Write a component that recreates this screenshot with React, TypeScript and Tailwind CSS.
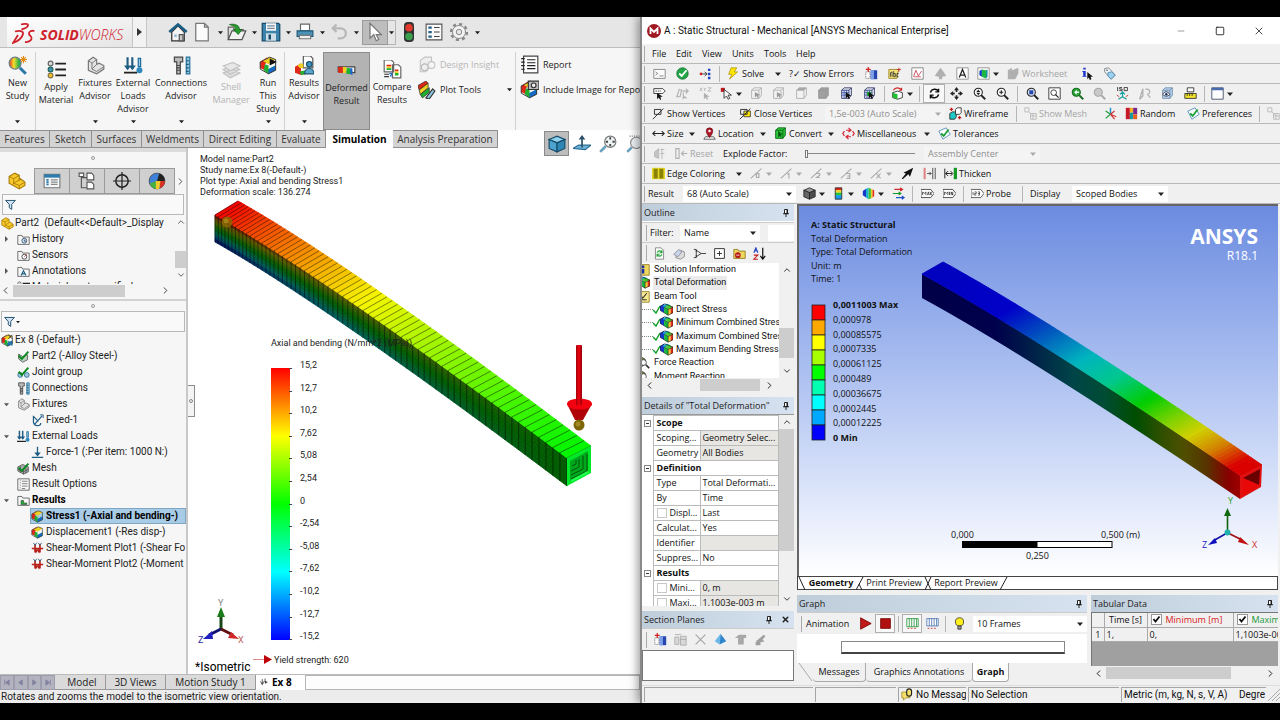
import type { ReactNode } from 'react'
import { ChevronDown, ChevronLeft, ChevronRight, ChevronUp, Minus, Square, X } from 'lucide-react'

/* ---------- icons, all drawn on a 16x16 grid ---------- */

const page = <path d="M3 1h7l3 3v11H3z" fill="#fff" stroke="#777" />
const dottedCube = (fill: string, line: string) => (
  <>
    <path d="M2 4l3-3h9v9l-3 4H2z" fill={fill} stroke={line} />
    <path d="M2 4h9v10M11 4l3-3" fill="none" stroke={line} />
  </>
)
const arrowHead = <path d="M7 6v8l2-2 2 3 1-1-1-3h3z" fill="#111" />
const lens = (fill: string, line: string) => (
  <>
    <circle cx="6.5" cy="6.5" r="5" fill={fill} stroke={line} strokeWidth="1.3" />
    <path d="M10 10l5 5" stroke={line} strokeWidth="2.4" />
  </>
)
const contourCube = (
  <>
    <path d="M0 4l5-3v11l-5-3z" fill="#1438c8" />
    <path d="M3 3l5-2 4 1-6 4z" fill="#18a0d8" />
    <path d="M5 5l5 3v7l-5-3z" fill="#18b840" />
    <path d="M6 4l5-2 5 3-6 3z" fill="#48c830" />
    <path d="M10 8l3-2v7l-3 2z" fill="#f0d020" />
    <path d="M13 6l3-1v7l-3 2z" fill="#e03018" />
    <path d="M0 4l6-3 10 4v7l-6 3-10-6zM5 5l5 3v7M10 8l6-3" fill="none" stroke="#111" strokeWidth=".7" />
  </>
)
const stressCube = (
  <>
    <path d="M1 5l6-4v4L5 7v5l-4-2z" fill="#e02818" />
    <path d="M3 4l6-3 5 2-6 4z" fill="#f0d020" />
    <path d="M5 7l3 1v3l6-3v4l-6 3-4-3z" fill="#20b030" />
    <path d="M8 11l6-3v4l-6 3z" fill="#1868c8" />
    <path d="M1 5l8-4 5 2v9l-6 3-7-4z" fill="none" stroke="#333" strokeWidth=".8" />
  </>
)
const funnel = <path d="M2 3h12l-4.5 5v6l-3-2V8z" fill="#cfe3f2" stroke="#25506f" strokeWidth="1.2" />
const folder = <path d="M1 14V3h5l1 2h8v9z" fill="#f7f7f7" stroke="#555" />
const bolts = (
  <>
    <path d="M2 1h7v4H7v10H4V5H2z" fill="#bbb" stroke="#444" />
    <path d="M4 8h3M4 10h3M4 12h3" stroke="#444" />
    <path d="M12 1h3v14h-3z" fill="#8fc4e0" stroke="#26719b" />
    <path d="M12 4h2M12 7h2M12 10h2M12 13h2" stroke="#164f70" />
  </>
)
const loads = (
  <>
    <path d="M3 1v10M7 1v10" stroke="#1f5d84" strokeWidth="1.8" />
    <path d="M0 8h6l-3 4zM4 8h6l-3 4z" fill="#1f5d84" />
    <path d="M0 14h11" stroke="#222" strokeWidth="1.5" />
    <path d="M12 2h2v7h-2z" fill="#9ac8e2" stroke="#1f6a98" />
    <circle cx="13" cy="12" r="2.5" fill="#2e87bd" />
  </>
)
const bracket = (
  <>
    <path d="M2 4l4-3 3 2v4l2-1 4 2v3l-6 4-7-3z" fill="#e3e3e3" stroke="#777" />
    <path d="M2 4l3 2v5l4 2 6-4M5 6l4-3M5 11l4-4" fill="none" stroke="#777" strokeWidth=".8" />
  </>
)
const yellowPart = (
  <>
    <path d="M1 4l5-3 4 2v4l1-1 4 3v3l-5 3-9-5z" fill="#f7c92a" stroke="#a87a08" />
    <path d="M1 4l4 2v5M5 6l5-3M5 10l5-3M10 15v-3l5-3M10 12l-5-2" fill="none" stroke="#a87a08" strokeWidth=".8" />
  </>
)
const check = <path d="M2 7l4 4 8-9" fill="none" stroke="#0a8a20" strokeWidth="2.4" />
const sectionPlane = (
  <>
    <path d="M7 4h8v11H7z" fill="#2846b0" />
    <path d="M7 4h4v11H7z" fill="#7da0e8" />
    <path d="M1 6h5v8H1z" fill="#fff" stroke="#555" strokeDasharray="1 1" />
    <path d="M1 3h6M4 0v6" stroke="#d02020" strokeWidth="1.5" />
  </>
)
const shearPlot = (
  <>
    <path d="M5 3v10M11 3v10M1 8h14" stroke="#b82018" strokeWidth="2" />
    <path d="M4 9h8l-2 5-2-3-2 3z" fill="#b82018" />
    <path d="M3 1l2 3 2-3M9 1l2 3 2-3" fill="none" stroke="#24506e" />
  </>
)

const icons: Record<string, ReactNode> = {
  home: (
    <>
      <path d="M3 8v7h10V8L8 3z" fill="#f4f4f4" stroke="#333" />
      <path d="M1 8l7-6 7 6" fill="none" stroke="#1b5f85" strokeWidth="2" />
      <path d="M9 10h3v5H9z" fill="#c9c9c9" stroke="#555" />
      <path d="M5 10h2v2H5z" fill="#8fb8d0" />
    </>
  ),
  newDoc: <path d="M3 1h7l3 3v11H3zM10 1v3h3" fill="#fbfbfb" stroke="#777" />,
  open: (
    <>
      <path d="M1 14V4h4l1 2h7v3" fill="#ddd" stroke="#666" />
      <path d="M1 14l3-7h11l-3 7z" fill="#f2f2f2" stroke="#555" />
      <path d="M2 2c5-1 8 1 8 4h2l-3 4-4-4h2C7 4 5 3 2 2z" fill="#279b2c" stroke="#15661b" strokeWidth=".6" />
    </>
  ),
  save: (
    <>
      <path d="M1 1h13l1 1v13H1z" fill="#3b83aa" stroke="#174a68" />
      <path d="M4 1h8v6H4z" fill="#f7f7f7" />
      <path d="M5 3h6M5 5h6" stroke="#789" />
      <path d="M4 9h8v6H4z" fill="#cfdde6" />
      <path d="M6 10h2v4H6z" fill="#174a68" />
    </>
  ),
  print: (
    <>
      <path d="M4 1h8v6H4z" fill="#fff" stroke="#666" />
      <path d="M1 7h14v5H1z" fill="#4a91b8" stroke="#1d5675" />
      <path d="M3 11h10v3H3z" fill="#eee" stroke="#777" />
    </>
  ),
  undo: <path d="M4 5h5c6 0 6 8 0 8H7M6 2L3 5l3 3" fill="none" stroke="#b8b8b8" strokeWidth="1.8" />,
  pointer: <path d="M4 1v12l3-3 2 5 2-1-2-4h4z" fill="#fff" stroke="#777" />,
  traffic: (
    <>
      <rect x="4" y="0" width="8" height="16" rx="3" fill="#333" />
      <circle cx="8" cy="4.5" r="3" fill="#e23a2c" />
      <circle cx="8" cy="11.5" r="3" fill="#3aa04c" />
    </>
  ),
  options: (
    <>
      <path d="M1 1h14v14H1z" fill="#fafafa" stroke="#555" />
      <path d="M3 3h3v2H3zM3 7h3v2H3zM3 11h3v2H3z" fill="#245f85" />
      <path d="M8 4h5M8 8h5M8 12h5" stroke="#444" />
    </>
  ),
  gear: (
    <>
      <circle cx="8" cy="8" r="6.4" fill="none" stroke="#888" strokeWidth="1.8" strokeDasharray="2.5 2.5" />
      <circle cx="8" cy="8" r="5.2" fill="#f4f4f4" stroke="#888" strokeWidth=".8" />
      <circle cx="8" cy="8" r="2.2" fill="#e6e6e6" stroke="#888" strokeWidth=".8" />
    </>
  ),
  newStudy: (
    <>
      <defs>
        <linearGradient id="lensFill">
          <stop offset="0" stopColor="#e03828" />
          <stop offset=".4" stopColor="#f4e02c" />
          <stop offset=".8" stopColor="#30b04c" />
        </linearGradient>
      </defs>
      <circle cx="6" cy="6" r="5" fill="url(#lensFill)" stroke="#6c7a80" />
      <path d="M10 10l5 5" stroke="#2a78a8" strokeWidth="2.5" />
      <path d="M13 0v6M10 3h6M11 1l4 4M15 1l-4 4" stroke="#e08a10" strokeWidth=".9" />
    </>
  ),
  material: (
    <>
      <circle cx="3" cy="3" r="2" fill="#ddd" stroke="#666" />
      <circle cx="3" cy="8" r="2" fill="#3f93c0" stroke="#265" />
      <circle cx="3" cy="13" r="2" fill="#f3c020" stroke="#875" />
      <path d="M7 3h9M7 8h9M7 13h9" stroke="#222" strokeWidth="1.5" />
    </>
  ),
  fixtures: bracket,
  loads,
  bolts,
  shell: (
    <>
      <path d="M1 11l8-3 6 3-8 4zM1 8l8-3 6 3-8 4z" fill="#ddd" stroke="#c2c2c2" />
      <path d="M1 5l8-3 6 3-8 4z" fill="#e8e8e8" stroke="#c2c2c2" />
    </>
  ),
  run: (
    <>
      {stressCube}
      <path d="M9 2l6 3-6 3z" fill="#111" />
    </>
  ),
  results: (
    <>
      <path d="M7 0h6l2 2v8H7z" fill="#fff" stroke="#555" />
      <path d="M0 9l5-3v7l5-1v3l-5 1-5-2z" fill="#e02818" />
      <path d="M2 8l3-2 2 1v3H4z" fill="#f0d020" />
      <path d="M4 13l6-1v3l-5 1z" fill="#20b030" />
      <circle cx="12" cy="7" r="2.3" fill="#3f93c0" stroke="#1d5675" />
      <path d="M8 15c0-6 8-6 8 0z" fill="#5aa5cc" stroke="#1d5675" />
    </>
  ),
  deformed: (
    <>
      <path d="M1 5h14v5l-5-1H1z" fill="#fff" stroke="#444" />
      <path d="M1 5h4v5H1z" fill="#e02818" />
      <path d="M5 5h3v5H5z" fill="#f0d020" />
      <path d="M8 6h3v5H8z" fill="#20b030" />
      <path d="M11 6h2v6l-2-1z" fill="#1868c8" />
    </>
  ),
  compare: (
    <>
      <path d="M1 0h6l2 2v8H1zM8 4h5l2 2v9H8z" fill="#fff" stroke="#666" />
      <path d="M3 4h4v1.500H3zM10 8h3v1.500h-3z" fill="#e02818" />
      <path d="M3 5.500h4V7H3zM10 9.500h3V11h-3z" fill="#f0d020" />
      <path d="M3 7h4v1.500H3zM10 11h3v2h-3z" fill="#20b030" />
      <path d="M1 12h4M1 14h4" stroke="#333" />
      <path d="M5.500 12c1-2 3 0 1 1v1" stroke="#1868c8" fill="none" />
    </>
  ),
  insight: (
    <>
      <path d="M2 4l4-3h6v7l-5 6H2z" fill="#eee" stroke="#c4c4c4" />
      <circle cx="6" cy="10" r="3" fill="none" stroke="#bbb" />
      <circle cx="12" cy="8" r="3" fill="#f6f6f6" stroke="#c4c4c4" />
    </>
  ),
  plotTools: (
    <>
      <path d="M0 4l7-4 2 2-8 6z" fill="#e02818" stroke="#222" strokeWidth=".6" />
      <path d="M1 8l8-6v4l-7 6z" fill="#f0d020" stroke="#222" strokeWidth=".6" />
      <path d="M2 12l8-6v4l-6 5z" fill="#20b030" stroke="#222" strokeWidth=".6" />
      <path d="M7 15l6-8 2 2-5 7z" fill="#8fc4e0" stroke="#333" />
    </>
  ),
  report: (
    <>
      <path d="M3 1h12v14H3z" fill="#fff" stroke="#444" />
      <path d="M6 4h7M6 6.500h7M6 9h7M6 11.500h7" stroke="#222" />
      <path d="M1 3h3M1 6h3M1 9h3M1 12h3" stroke="#222" />
    </>
  ),
  imageReport: (
    <>
      {stressCube}
      <path d="M7 1h9v7H7z" fill="#bbb" stroke="#333" />
      <circle cx="11.5" cy="4.5" r="2" fill="#eee" stroke="#333" />
    </>
  ),
  viewCube: (
    <>
      <path d="M1 4l7-3 7 3-7 3z" fill="#8fd0ee" stroke="#144a68" />
      <path d="M1 4l7 3v8l-7-3z" fill="#4da3cf" stroke="#144a68" />
      <path d="M15 4L8 7v8l7-3z" fill="#2f86b4" stroke="#144a68" />
    </>
  ),
  normalTo: (
    <>
      <path d="M0 12l5-3h11l-5 4z" fill="#6cb2d8" stroke="#2a6a90" />
      <path d="M8 11V2" stroke="#2b5068" strokeWidth="1.5" />
      <path d="M5 4l3-4 3 4z" fill="#2b5068" />
    </>
  ),
  zoomFit: (
    <>
      <circle cx="10" cy="6" r="5" fill="#eef3f6" stroke="#777" />
      <path d="M6 10l-5 5" stroke="#6aa2c2" strokeWidth="2.4" />
      <path d="M10 2v2M10 8v2M6 6h2M12 6h2" stroke="#444" strokeWidth="1.6" />
    </>
  ),
  zoomArea: (
    <>
      <circle cx="10" cy="7" r="5" fill="#eef3f6" stroke="#888" />
      <path d="M6 11l-4 4" stroke="#6aa2c2" strokeWidth="2.4" />
      <path d="M4 1h12v10" stroke="#888" fill="none" strokeDasharray="1 1" />
    </>
  ),
  part: yellowPart,
  propertyList: (
    <>
      <path d="M1 2h14v12H1z" fill="#f4f8fa" stroke="#777" />
      <path d="M1 2h14v3H1z" fill="#2c7ba8" />
      <path d="M3 7h2M3 9h2M3 11h2" stroke="#2c7ba8" strokeWidth="1.5" />
      <path d="M7 7h6M7 9h6M7 11h6" stroke="#888" />
    </>
  ),
  configs: (
    <>
      <path d="M3 1v13h5M3 5h5" fill="none" stroke="#555" />
      <path d="M1 1h4v3H1zM8 1h4l2 2v4H8zM8 9h4l2 2v4H8z" fill="#fff" stroke="#555" />
    </>
  ),
  target: (
    <>
      <circle cx="8" cy="8" r="5.5" fill="none" stroke="#222" strokeWidth="1.3" />
      <path d="M8 0v16M0 8h16" stroke="#222" strokeWidth="1.1" />
    </>
  ),
  ball: (
    <>
      <circle cx="8" cy="8" r="7" fill="#3f80d8" stroke="#333" strokeWidth=".6" />
      <path d="M8 8l2-6.700a7 7 0 0 1 5 6.700z" fill="#222" />
      <path d="M10 8h5a7 7 0 0 1-4 6.400z" fill="#d83020" />
      <path d="M1.500 10L8 8l-1 7a7 7 0 0 1-5.500-5z" fill="#48b040" />
      <path d="M7 8h4l-1 7H7z" fill="#f2c828" />
    </>
  ),
  funnel,
  history: (
    <>
      {folder}
      <circle cx="9" cy="9.5" r="3" fill="#dceaf2" stroke="#246" />
      <path d="M9 8v2h2" stroke="#246" fill="none" />
    </>
  ),
  sensors: (
    <>
      {folder}
      <circle cx="9" cy="9.5" r="3" fill="#fff" stroke="#333" />
      <path d="M9 9.500l3-3" stroke="#c22" />
    </>
  ),
  notes: (
    <>
      {folder}
      <path d="M5 13l3-6 3 6M6 11h4" stroke="#1c5e88" fill="none" strokeWidth="1.4" />
    </>
  ),
  study: (
    <>
      {stressCube}
      <path d="M9 9l5 5" stroke="#2a78a8" strokeWidth="2" />
      <path d="M9 1l5 5M14 1L9 6" stroke="#222" />
    </>
  ),
  solidCheck: (
    <>
      <path d="M2 5l5 3 6-2v6l-6 3-5-4z" fill="#b9cfc0" stroke="#555" />
      {check}
    </>
  ),
  jointCheck: (
    <>
      <circle cx="4" cy="11" r="3" fill="#9dc7dd" stroke="#28698e" />
      <circle cx="12" cy="11" r="3" fill="#9dc7dd" stroke="#28698e" />
      {check}
    </>
  ),
  meshCheck: (
    <>
      <path d="M1 6l6-3 7 3v6l-6 3-7-4z" fill="#aaa" stroke="#555" />
      <path d="M1 9l7 3 6-3M4 5v8M8 8v7M11 7v7" stroke="#555" fill="none" />
      {check}
    </>
  ),
  fixed: (
    <>
      <path d="M3 2v8c1 6 9 5 9 1M4 13l10-11M3 3l6 6" stroke="#1f5d84" strokeWidth="1.5" fill="none" />
      <path d="M11 1h4v4" stroke="#1f5d84" fill="none" />
    </>
  ),
  force: (
    <>
      <path d="M8 1v9M1 14h14" stroke="#1f5d84" strokeWidth="1.6" />
      <path d="M4 8h8l-4 5z" fill="#1f5d84" />
    </>
  ),
  resultOptions: (
    <>
      <path d="M1 1h14v14H1z" fill="#fafafa" stroke="#555" />
      <path d="M4 2v12" stroke="#999" strokeDasharray="2 1" />
      <path d="M6 4h7M6 7h7M6 10h7M6 13h4" stroke="#666" />
    </>
  ),
  resultsFolder: (
    <>
      {folder}
      <path d="M5 8h3v3h4v2H5z" fill="#20b030" stroke="#333" strokeWidth=".7" />
    </>
  ),
  stress: stressCube,
  shearPlot,
  studyTab: (
    <>
      <path d="M4 2v9M9 1v5M1 6l3 6 3-6" stroke="#333" fill="none" strokeWidth="1.4" />
      <path d="M8 5l6 2-5 3z" fill="#333" />
    </>
  ),

  console: <path d="M1 3h14v11H1zM3 6l3 2-3 2M8 11h5" fill="#fbfbfb" stroke="#777" />,
  okBall: (
    <>
      <circle cx="8" cy="8" r="7" fill="#23a646" stroke="#0f6d2a" />
      <path d="M4 8l3 3 6-7" stroke="#fff" strokeWidth="2.2" fill="none" />
    </>
  ),
  treeJump: (
    <>
      <path d="M1 7h3v3H1z" fill="#c22" />
      <path d="M4 8.500h5M7 6l3 2.500L7 11" stroke="#222" fill="none" />
      <path d="M11 2h3v3h-3zM11 7h3v3h-3zM11 12h3v3h-3z" fill="#2244c0" />
    </>
  ),
  bolt: <path d="M5 1h7L9 6h4L3 15l3-6H2z" fill="#ffe600" stroke="#a08600" strokeWidth=".8" />,
  sectionPlane,
  noteTag: (
    <>
      <path d="M1 3h12l-2 11H1z" fill="#f5e27a" stroke="#997f1a" />
      <path d="M3 12V7l2-1v6M7 5v7h2V8H7M13 8h-2v4h2" stroke="#333" fill="none" />
      <path d="M11 3h5M13.500 1v5" stroke="#c22" />
    </>
  ),
  chartBox: (
    <>
      <path d="M1 1h14v14H1z" fill="#fff" stroke="#777" />
      <path d="M3 12l3-8 3 7 4-6M4 12h8" stroke="#c43a4a" fill="none" />
    </>
  ),
  greyTree: <path d="M8 1l4 5 3 5-5 1v3H6v-3l-5-1 3-5z" fill="#b0b0b0" />,
  letterBox: (
    <>
      <path d="M1 1h14v14H1z" fill="#fff" stroke="#888" />
      <path d="M4 13l4-10 4 10M5 10h6" stroke="#222" strokeWidth="1.5" fill="none" />
    </>
  ),
  cubeBox: (
    <>
      <path d="M1 1h14v14H1z" fill="#fff" stroke="#888" />
      <path d="M3 5l3-2v9l-3-2z" fill="#1438c8" />
      <path d="M6 3l5 1v10l-5-2z" fill="#18b840" />
      <path d="M11 4l2-1v9l-2 2z" fill="#189098" />
    </>
  ),
  worksheet: <path d="M1 4l5-3v3l8-3v7l-4 7H1z" fill="#b0b0b0" />,
  info: (
    <>
      <path d="M4 1h3v2H4zM3 5h4v6h1v1H3v-1h1V6H3z" fill="#1830d0" />
      <path d="M9 6v9l2-2 1 3 2-1-1-3h3z" fill="#111" />
    </>
  ),
  tag: (
    <>
      <path d="M2 2l5-1 8 9-5 5-8-9z" fill="#e9f4fb" stroke="#777" />
      <path d="M6 7l5-1 4 4-5 5-4-4z" fill="#9cd0f0" stroke="#4a86aa" />
      <circle cx="5" cy="4" r="1" fill="#555" />
    </>
  ),
  labelPick: (
    <>
      <path d="M1 2h11l3 3-3 3H1z" fill="#fff" stroke="#222" />
      <path d="M3 5h7" stroke="#222" strokeDasharray="2 1" />
      <path d="M5 7v8l2-2 2 3 1-1-1-3h3z" fill="#111" />
    </>
  ),
  greyPick: <path d="M4 3l-3 9h4l2-8zM8 5h7M12 2l3 3-3 3M9 7v7l2-2 2 2" stroke="#b0b0b0" fill="none" strokeWidth="1.4" />,
  xyz: (
    <>
      <path d="M1 1l3 4M4 1L1 5M6 1l1 2 2-2M7 3v2M11 1h4l-4 4h4" stroke="#b0b0b0" fill="none" />
      <path d="M6 7v8l2-2 2 3 1-1-1-3h3z" fill="#b0b0b0" />
    </>
  ),
  pickMode: (
    <>
      <path d="M1 1h5v5H1z" fill="#c01818" />
      <path d="M5 3v11l3-3 2 4 2-1-2-4h4z" fill="#fff" stroke="#222" />
    </>
  ),
  vertexCube: (
    <>
      {dottedCube('#f2f2f2', '#a8a8a8')}
      <path d="M6 6v7l2-2 2 3v-4h3z" fill="#999" />
    </>
  ),
  faceCube: (
    <>
      {dottedCube('#f2f2f2', '#a8a8a8')}
      <path d="M2 4l3-3h9l-3 3z" fill="#a8a8a8" />
    </>
  ),
  bodyCube: dottedCube('#a0a0a0', '#989898'),
  nodeCube: (
    <>
      {dottedCube('#dfe4f4', '#26305c')}
      <path d="M2 7h9M2 10h9M5 4v10M8 4v10" stroke="#3850b0" />
      {arrowHead}
    </>
  ),
  elemCube: (
    <>
      {dottedCube('#dfe4f4', '#26305c')}
      <path d="M2 7h9M2 10h9M5 4v10M8 4v10" stroke="#3850b0" />
      <path d="M5 6h5v5H5z" fill="#18a030" />
      {arrowHead}
    </>
  ),
  extend: (
    <>
      <path d="M2 7l6-2 6 2v6l-6 2-6-2z" fill="#fff" stroke="#222" />
      <path d="M2 7l6 2v6l-6-2z" fill="#20c030" />
      <path d="M3 4c2-4 8-4 10 0M13 1v3h-3" stroke="#d02020" fill="none" strokeWidth="1.4" />
    </>
  ),
  rotate: (
    <path d="M3 7c1-5 8-6 10-1M13 9c-1 5-8 6-10 1M13 2v4H9M3 14v-4h4" stroke="#111" fill="none" strokeWidth="1.8" />
  ),
  move: (
    <path
      d="M8 0l3 4H9v2H7V4H5zM8 16l3-4H9v-2H7v2H5zM0 8l4-3v2h2v2H4v2zM16 8l-4-3v2h-2v2h2v2z"
      fill="#222"
    />
  ),
  zoomPan: (
    <>
      {lens('#fff', '#222')}
      <path d="M4 6l2.500-3L9 6zM4 7l2.500 3L9 7z" fill="#222" />
    </>
  ),
  zoomIn: (
    <>
      {lens('#fff', '#222')}
      <path d="M4 6.500h5M6.500 4v5" stroke="#222" strokeWidth="1.4" />
    </>
  ),
  zoomModel: (
    <>
      {lens('#dfe8f8', '#222')}
      <path d="M4 4h5v5H4z" fill="#2846b0" />
    </>
  ),
  zoomBox: (
    <>
      <path d="M1 1h14v14H1z" fill="#fff" stroke="#222" />
      <circle cx="7" cy="7" r="3.5" fill="none" stroke="#222" />
      <path d="M9 9l4 4" stroke="#222" strokeWidth="1.5" />
    </>
  ),
  zoomBack: (
    <>
      {lens('#28a838', '#156a20')}
      <path d="M4 6.500l3-3v2h3v2H7v2z" fill="#fff" />
    </>
  ),
  zoomNext: lens('#c8c8c8', '#a8a8a8'),
  iso: (
    <>
      <path d="M2 0v5M7.500.5H4.500v2h3v2H4M10 .5h4v4h-4z" stroke="#222" fill="none" />
      <path d="M8 7v5M8 12l-5 3M8 12l5 3M5 9l3-3 3 3" stroke="#18a0a0" strokeWidth="1.5" fill="none" />
      <path d="M1 10l3 2M15 10l-3 2" stroke="#c22" />
    </>
  ),
  lookAt: <path d="M2 15L6 2v9zM9 3c6-2 7 5 3 6l3 4" stroke="#b0b0b0" fill="none" strokeWidth="1.6" />,
  eyeCube: (
    <>
      {dottedCube('#b8d0ec', '#6a8aa8')}
      <path d="M2 9c3-4 6-4 9 0-3 3-6 3-9 0z" fill="#fff" stroke="#223" />
      <circle cx="6.5" cy="9" r="1.6" fill="#223a70" />
    </>
  ),
  ruler: (
    <>
      <path d="M4 1h8v5H4z" fill="#fff" stroke="#222" />
      <path d="M1 8h14v6H1z" fill="#f3e32c" stroke="#222" />
      <path d="M4 8v3M7 8v3M10 8v3" stroke="#222" />
    </>
  ),
  windowBox: (
    <>
      <path d="M1 1h14v14H1z" fill="#fff" stroke="#33405a" />
      <path d="M1 1h14v3H1z" fill="#4a6ab0" />
    </>
  ),
  vertices: <path d="M3 3h8v6H3zM1 15L14 2" stroke="#333" fill="none" strokeWidth="1.2" />,
  closeVertices: (
    <>
      <path d="M6 5h8v7H6z" fill="#ffe600" stroke="#333" />
      <path d="M2 3h8v6H2zM1 15L14 2" stroke="#333" fill="none" strokeWidth="1.2" />
    </>
  ),
  wireframe: (
    <>
      <path d="M1 8l3-2h5v6l-2 3H1z" fill="#20c8c8" stroke="#222" />
      <path d="M8 3l2-2h5v6l-2 2H8z" fill="#fff" stroke="#222" />
      <path d="M1 3h4M3 1v4M11 13h4M13 11v4" stroke="#c01818" strokeWidth="1.6" />
    </>
  ),
  showMesh: <path d="M1 1h5v5H1zM8 8h7v7H8zM8 11h7M11 8v7M6 6l3 3" stroke="#b4b4b4" fill="none" />,
  axes: (
    <>
      <path d="M8 1v8" stroke="#2090c8" strokeWidth="1.8" />
      <path d="M8 9l-6 5M2 5l6 4" stroke="#20a040" strokeWidth="1.6" />
      <path d="M8 9l7 3M8 9l5 6M8 9l5-4" stroke="#d03030" strokeWidth="1.4" />
    </>
  ),
  random: (
    <>
      <path d="M1 1h5v14H1z" fill="#c81828" />
      <path d="M6 1h4v6H6z" fill="#f3b020" />
      <path d="M10 1h5v8h-5z" fill="#7a2890" />
      <path d="M6 7h4v8H6z" fill="#1a9aa0" />
      <path d="M10 9h5v6h-5z" fill="#e86020" />
    </>
  ),
  prefs: (
    <>
      <path d="M1 5l9-4 5 8-9 6z" fill="#f8fbff" stroke="#4a88b8" />
      <path d="M4 8l3 3 6-8" stroke="#18a030" strokeWidth="2.2" fill="none" />
    </>
  ),
  size: <path d="M1 8h14M4 5L1 8l3 3M12 5l3 3-3 3" stroke="#222" fill="none" strokeWidth="1.3" />,
  location: (
    <>
      <path d="M3 12l-2 3h14l-2-3z" fill="#fff" stroke="#444" />
      <path d="M8 13C4 8 4 6 4 5a4 4 0 0 1 8 0c0 1 0 3-4 8z" fill="#b01828" stroke="#500" strokeWidth=".7" />
      <circle cx="8" cy="5" r="1.5" fill="#fff" />
    </>
  ),
  convert: (
    <>
      {dottedCube('#28c838', '#0c5c14')}
      <path d="M5 5v8l2-2 2 2V9h2z" fill="#0c5c14" />
    </>
  ),
  misc: (
    <path
      d="M5 4h5M8 1l3 3-3 2M3 5L1 8l2 3M13 5l2 3-2 3M11 12H6M8 10l-3 2 3 3"
      stroke="#d82838"
      fill="none"
      strokeWidth="1.5"
    />
  ),
  explode: <path d="M2 6l5-4v12l-5-2zM9 3h5M11 3v12M9 8h5" stroke="#b0b0b0" fill="#c4c4c4" />,
  reset: <path d="M1 2h4v12H1zM15 8H8M11 5L8 8l3 3" stroke="#b0b0b0" fill="none" strokeWidth="1.4" />,
  edgeColor: (
    <>
      <path d="M0 1h16v14H0z" fill="#e6d820" />
      <path d="M2 2h5v12H2zM9 2h5v12H9z" fill="#8a8208" />
    </>
  ),
  edge0: <path d="M1 14L14 2M8 8h3v5H8z" stroke="#a8a8a8" fill="none" strokeWidth="1.3" />,
  edge1: <path d="M1 14L14 2M9 9l2-1v6" stroke="#a8a8a8" fill="none" strokeWidth="1.3" />,
  edge2: <path d="M1 14L14 2M8 8h4v2l-4 3h4" stroke="#a8a8a8" fill="none" strokeWidth="1.3" />,
  edge3: <path d="M1 14L14 2M8 8h4v6H8M9 11h3" stroke="#a8a8a8" fill="none" strokeWidth="1.3" />,
  edge4: <path d="M1 14L14 2M8 8l5 6M13 8l-5 6" stroke="#a8a8a8" fill="none" strokeWidth="1.3" />,
  blackArrow: <path d="M15 1l-4 11-2-3-7 6-1-1 5-6-3-1z" fill="#111" />,
  gap: (
    <>
      <path d="M2 1v14" stroke="#e08080" strokeWidth="2.5" />
      <path d="M5 8h5M8 6l2 2-2 2M12 1v14M15 1v14" stroke="#333" fill="none" />
    </>
  ),
  thicken: (
    <>
      <path d="M1 2v12M2 8h8M5 5L2 8l3 3M8 5l3 3-3 3" stroke="#222" fill="none" strokeWidth="1.2" />
      <path d="M12 1h4v14h-4z" fill="#189a28" />
    </>
  ),
  greyCube: (
    <>
      <path d="M1 4l7-3 7 3-7 3z" fill="#999" stroke="#222" />
      <path d="M1 4l7 3v8l-7-3z" fill="#666" stroke="#222" />
      <path d="M15 4L8 7v8l7-3z" fill="#4c4c4c" stroke="#222" />
    </>
  ),
  legend: (
    <>
      <path d="M4 1h8v3H4z" fill="#e02818" />
      <path d="M4 4h8v3H4z" fill="#f4d820" />
      <path d="M4 7h8v3H4z" fill="#20c838" />
      <path d="M4 10h8v5H4z" fill="#1898e8" />
      <path d="M4 1h8v14H4z" fill="none" stroke="#222" />
    </>
  ),
  contour: contourCube,
  bands: (
    <>
      <path d="M1 5l4-3v11l-4-3z" fill="#1438c8" />
      <path d="M5 2l3-1v14l-3-2z" fill="#18b0d0" />
      <path d="M8 1l3 1v12l-3 1z" fill="#38c040" />
      <path d="M11 2l2 1v10l-2 1z" fill="#f0d020" />
      <path d="M13 3l2 1v7l-2 2z" fill="#e03018" />
    </>
  ),
  vectors: (
    <>
      <path d="M3 3h10M10 1l3 2-3 2" stroke="#d02828" fill="none" strokeWidth="1.4" />
      <path d="M1 8h10M8 6l3 2-3 2" stroke="#189a28" fill="none" strokeWidth="1.4" />
      <path d="M5 13h10M12 11l3 2-3 2" stroke="#2050c8" fill="none" strokeWidth="1.4" />
    </>
  ),
  maxTag: <path d="M0 3h12l4 5-4 5H0zM2 10V6l2 2 2-2v4M8 10l1-4 1 4M11 6l2 4M13 6l-2 4" stroke="#333" fill="#fff" />,
  minTag: <path d="M0 3h12l4 5-4 5H0zM2 10V6l2 2 2-2v4M8 6v4M10 10V6l2 4V6" stroke="#333" fill="#fff" />,
  probe: <path d="M0 3h12l4 5-4 5H0zM2.500 6v4M4.500 6h2v2h-2v2h2M8.500 6h2v4h-2M8.500 8h2" stroke="#333" fill="#fff" strokeWidth=".9" />,
  refresh: (
    <>
      {page}
      <path d="M5 7c1-3 5-3 6 0M11 9c-1 3-5 3-6 0M11 4v3H8M5 12V9h3" stroke="#18a030" fill="none" strokeWidth="1.3" />
    </>
  ),
  eraser: (
    <>
      <path d="M3 13l6-9 5 2v6l-5 3z" fill="#ddd" stroke="#888" />
      <path d="M1 9l6-6 4 3-5 6z" fill="#c8d4e8" stroke="#889" />
    </>
  ),
  merge: <path d="M1 3h3v3M1 13h3v-3M4 4l6 4-6 4zM10 8h6" stroke="#222" fill="none" />,
  plusBox: <path d="M2 2h12v12H2zM5 8h6M8 5v6" stroke="#333" fill="#fff" strokeWidth="1.2" />,
  folderStop: (
    <>
      <path d="M1 14V3h5l1 2h8v9z" fill="#f0d860" stroke="#8a7414" />
      <circle cx="6" cy="10" r="3.5" fill="#b81818" />
      <path d="M4 10h4" stroke="#fff" />
    </>
  ),
  sortAz: (
    <>
      <path d="M1 7l2.500-6L6 7M2 5h3" stroke="#2040c0" fill="none" strokeWidth="1.3" />
      <path d="M1 10h5l-5 5h5" stroke="#c01818" fill="none" strokeWidth="1.3" />
      <path d="M12 1v13M9 11l3 4 3-4" stroke="#111" fill="none" strokeWidth="1.5" />
    </>
  ),
  infoFolder: (
    <>
      <path d="M1 2h14v13H1z" fill="#f0d860" stroke="#8a7414" />
      <path d="M6 3h3v3H6zM6 7h3v6H6z" fill="#1830a0" />
    </>
  ),
  beamTool: (
    <>
      <path d="M1 2h14v13H1z" fill="#f6e88c" stroke="#8a7414" />
      <path d="M4 6l3 4 5-6M4 12h8" stroke="#333" fill="none" strokeWidth="1.4" />
    </>
  ),
  probeLens: (
    <>
      <path d="M1 4l4-3 5 3v6l-4 3-5-3z" fill="#7a9a40" stroke="#333" />
      <circle cx="8" cy="8" r="3.5" fill="#fff" stroke="#333" />
      <path d="M11 11l4 4" stroke="#333" strokeWidth="2" />
    </>
  ),
  newPlaneOff: <path d="M1 5h5v9H1zM8 4h7v11H8zM8 8h7M1 2h8" stroke="#a8a8a8" fill="#d8d8d8" />,
  cross: <path d="M2 2l12 12M14 2L2 14" stroke="#a8a8a8" strokeWidth="1.6" />,
  bluePyramid: (
    <>
      <path d="M8 1L1 10l6 4z" fill="#6ab8e8" />
      <path d="M8 1l7 9-8 4z" fill="#2f86cc" />
    </>
  ),
  greyHat: <path d="M1 6l5-4h9v4h-3v8H5V6z" fill="#a8a8a8" />,
  greyStack: <path d="M2 15v-4h6v4zM4 9l8-7 2 2-4 5zM3 9h9v2H3z" fill="#a0a0a0" />,
  play: <path d="M2 1l13 7-13 7z" fill="#c01818" stroke="#700" />,
  stop: <path d="M2 2h12v12H2z" fill="#b01010" stroke="#700" />,
  distGreen: (
    <>
      <path d="M1 2h14v10H1zM4 2v10M7 2v10M10 2v10M13 2v10" stroke="#209038" fill="#fff" />
      <path d="M2 14h12" stroke="#c22" strokeDasharray="2 2" />
    </>
  ),
  distBlue: (
    <>
      <path d="M1 2h14v9H1zM4 2v9M7 2v9M10 2v9M13 2v9" stroke="#4870b0" fill="#fff" />
      <path d="M2 14h12" stroke="#c22" strokeDasharray="2 2" />
    </>
  ),
  bulb: (
    <>
      <circle cx="8" cy="6" r="5" fill="#fff01c" stroke="#333" />
      <path d="M6 11h4v4H6z" fill="#999" stroke="#333" />
    </>
  ),
  message: (
    <>
      <path d="M1 5h10v7H6l-3 3v-3H1z" fill="#f4e06a" stroke="#a08a20" />
      <rect x="7" y="1" width="6" height="9" rx="3" fill="#f4e06a" stroke="#222" strokeWidth="1.4" />
    </>
  ),
  pin: <path d="M5 1h6v8H5zM10 1v8M2 9.500h12M8 10v6" fill="#fff" stroke="#111" strokeWidth="1.8" />,
}

function Icon({ name, size = 13 }: { name: string; size?: number }) {
  return (
    <svg width={size} height={size} viewBox="0 0 16 16" className="shrink-0" aria-hidden="true">
      {icons[name]}
    </svg>
  )
}

function Caret({ color = '#222', size = 6 }: { color?: string; size?: number }) {
  return (
    <svg width={size} height={size} viewBox="0 0 6 6" className="shrink-0" aria-hidden="true">
      <path d="M0 1.500h6L3 5z" fill={color} />
    </svg>
  )
}

/* ---------- shared geometry for the two beams ---------- */

type Pt = [number, number]

function bezier(a: Pt, c: Pt, b: Pt, t: number): Pt {
  const u = 1 - t
  return [u * u * a[0] + 2 * u * t * c[0] + t * t * b[0], u * u * a[1] + 2 * u * t * c[1] + t * t * b[1]]
}

const mix = (a: Pt, b: Pt, k: number): Pt => [a[0] + (b[0] - a[0]) * k, a[1] + (b[1] - a[1]) * k]
const poly = (...pts: Pt[]) => pts.map((p) => p[0].toFixed(2) + ',' + p[1].toFixed(2)).join(' ')

/* ---------- SOLIDWORKS window ---------- */

function QuickButton({ name, label, className, size = 20 }: { name: string; label: string; className: string; size?: number }) {
  return (
    <button aria-label={label} className={`flex h-[25px] items-center justify-center ${className}`}>
      <Icon name={name} size={size} />
    </button>
  )
}

function QuickCaret() {
  return (
    <span className="flex w-3 justify-center">
      <Caret size={5} />
    </span>
  )
}

function SwTitleBar() {
  return (
    <header className="flex h-[31px] shrink-0 items-center border-b border-[#bdbdbd] bg-[#e6e6e6]">
      <div className="ml-[7px] flex h-full w-[125px] items-center gap-1 bg-linear-to-br from-white to-[#e4e4e4] pt-1 pl-[5px]">
        <svg width="24" height="22" viewBox="0 0 24 22" fill="none" stroke="#d0202c" strokeWidth="1.8" aria-hidden="true">
          <path d="M9 1.500c3-.8 7-.8 7 .6 0 2-4 3.800-6.500 4.400" />
          <path d="M3 8.500c4-1 8.500-1 8 2.500-.6 3.500-5 7.500-10 9l5-8" />
          <path d="M22.500 8c-3-.8-6 .4-5.500 3 .4 2 3.500 2.500 2.500 5-.7 2-4 3.500-6.500 3" />
        </svg>
        <span className="text-[14px] whitespace-nowrap text-[#d0202c] italic">
          <b>SOLID</b>
          <span className="font-light">WORKS</span>
        </span>
      </div>
      <button aria-label="Expand menu" className="flex h-full w-[15px] items-center justify-center border-x border-[#c6c6c6] bg-[#f2f2f2]">
        <svg width="5" height="8" viewBox="0 0 5 8" aria-hidden="true">
          <path d="M0 0l5 4-5 4z" fill="#333" />
        </svg>
      </button>
      <div className="ml-[19px] flex items-center">
        <QuickButton name="home" label="Home" className="w-6" />
        <QuickButton name="newDoc" label="New" className="w-6" />
        <QuickCaret />
        <QuickButton name="open" label="Open" className="w-[22px]" />
        <QuickCaret />
        <QuickButton name="save" label="Save" className="w-[22px]" />
        <QuickCaret />
        <QuickButton name="print" label="Print" className="w-[22px]" size={18} />
        <QuickCaret />
        <QuickButton name="undo" label="Undo" className="w-[22px]" />
        <QuickCaret />
        <QuickButton name="pointer" label="Select" className="w-[26px] border border-[#9a9a9a] bg-[#bdbdbd]" />
        <button aria-label="Select options" className="flex h-[25px] w-2 items-center justify-center border border-l-0 border-[#b5b5b5]">
          <Caret size={5} />
        </button>
        <QuickButton name="traffic" label="Rebuild" className="w-[25px]" />
        <QuickButton name="options" label="File properties" className="w-[25px]" size={18} />
        <QuickButton name="gear" label="Options" className="w-[25px]" />
        <QuickCaret />
      </div>
    </header>
  )
}

type RibbonItem = { icon: string; lines: string[]; width: string; caret?: boolean; low?: boolean; off?: boolean; active?: boolean; rule?: boolean }

const ribbon: RibbonItem[] = [
  { icon: 'newStudy', lines: ['New', 'Study'], width: 'w-9', caret: true, rule: true },
  { icon: 'material', lines: ['Apply', 'Material'], width: 'w-10', low: true },
  { icon: 'fixtures', lines: ['Fixtures', 'Advisor'], width: 'w-[38px]', caret: true },
  { icon: 'loads', lines: ['External', 'Loads', 'Advisor'], width: 'w-[38px]', caret: true },
  { icon: 'bolts', lines: ['Connections', 'Advisor'], width: 'w-[58px]', caret: true },
  { icon: 'shell', lines: ['Shell', 'Manager'], width: 'w-[42px]', low: true, off: true },
  { icon: 'run', lines: ['Run', 'This', 'Study'], width: 'w-[33px]', caret: true, rule: true },
  { icon: 'results', lines: ['Results', 'Advisor'], width: 'w-[38px]', caret: true },
  { icon: 'deformed', lines: ['Deformed', 'Result'], width: 'w-[47px]', low: true, active: true },
  { icon: 'compare', lines: ['Compare', 'Results'], width: 'w-11', low: true },
]

function Ribbon() {
  return (
    <div className="flex h-[82px] shrink-0 bg-[#f6f6f6] pt-1 text-[9px] leading-[13px] whitespace-nowrap text-[#222]">
      {ribbon.map((r) => (
        <button
          key={r.icon}
          disabled={r.off}
          className={`flex shrink-0 flex-col items-center ${r.width} ${r.low ? 'pt-2' : 'pt-1'} ${r.active ? 'border border-[#8c8c8c] bg-[#b3b3b3]' : ''} ${r.rule ? 'border-r border-[#d0d0d0]' : ''} ${r.off ? 'text-[#b5b5b5]' : ''}`}
        >
          <Icon name={r.icon} size={19} />
          <span className="mt-px flex flex-col items-center">
            {r.lines.map((l) => (
              <span key={l}>{l}</span>
            ))}
          </span>
          {r.caret && (
            <span className="mt-auto pb-[6px]">
              <Caret size={5} />
            </span>
          )}
        </button>
      ))}
      <div className="flex w-[102px] shrink-0 flex-col gap-1 border-r border-[#d0d0d0] pt-0.5 pr-[3px] pl-1">
        <button disabled className="flex h-[21px] items-center gap-1 text-[#b5b5b5]">
          <Icon name="insight" size={18} />
          Design Insight
        </button>
        <button className="flex h-[21px] items-center gap-1">
          <Icon name="plotTools" size={18} />
          Plot Tools
          <span className="ml-auto">
            <Caret size={5} />
          </span>
        </button>
      </div>
      <div className="flex min-w-0 flex-1 flex-col gap-1 overflow-hidden pt-0.5 pl-1">
        <button className="flex h-[21px] items-center gap-1">
          <Icon name="report" size={19} />
          Report
        </button>
        <button className="flex h-[21px] items-center gap-1">
          <Icon name="imageReport" size={19} />
          Include Image for Report
        </button>
      </div>
    </div>
  )
}

const commandTabs = [
  ['Features', 'w-[50px]'],
  ['Sketch', 'w-[42px]'],
  ['Surfaces', 'w-[50px]'],
  ['Weldments', 'w-[62px]'],
  ['Direct Editing', 'w-[73px]'],
  ['Evaluate', 'w-[49px]'],
  ['Simulation', 'w-[67px]'],
  ['Analysis Preparation', 'w-[105px]'],
]

function CommandTabs() {
  return (
    <nav className="flex h-[18px] shrink-0 bg-white text-[10px] whitespace-nowrap">
      {commandTabs.map(([label, width]) => (
        <button
          key={label}
          className={`shrink-0 ${width} ${label === 'Simulation' ? 'bg-white font-bold text-black' : 'border-t border-r border-b border-[#8f8f8f] bg-[#d3d3d3] text-[#333]'}`}
        >
          {label}
        </button>
      ))}
    </nav>
  )
}

function Grip() {
  return (
    <div className="flex h-[10px] items-center justify-center">
      <span className="h-1 w-1 rounded-full border border-[#999]" />
    </div>
  )
}

function Twisty({ open }: { open?: boolean }) {
  if (open === undefined) return <span className="w-3 shrink-0" />
  return (
    <span className="flex w-3 shrink-0 justify-center">
      {open ? (
        <Caret size={5} color="#555" />
      ) : (
        <svg width="3" height="6" viewBox="0 0 3 6" aria-hidden="true">
          <path d="M0 0l3 3-3 3z" fill="#555" />
        </svg>
      )}
    </span>
  )
}

type Node = { icon: string; label: string; open?: boolean; level: number; bold?: boolean; selected?: boolean }

const studyTree: Node[] = [
  { icon: 'study', label: 'Ex 8 (-Default-)', level: 0 },
  { icon: 'solidCheck', label: 'Part2 (-Alloy Steel-)', level: 1 },
  { icon: 'jointCheck', label: 'Joint group', level: 1 },
  { icon: 'bolts', label: 'Connections', level: 1 },
  { icon: 'fixtures', label: 'Fixtures', level: 1, open: true },
  { icon: 'fixed', label: 'Fixed-1', level: 2 },
  { icon: 'loads', label: 'External Loads', level: 1, open: true },
  { icon: 'force', label: 'Force-1 (:Per item: 1000 N:)', level: 2 },
  { icon: 'meshCheck', label: 'Mesh', level: 1 },
  { icon: 'resultOptions', label: 'Result Options', level: 1 },
  { icon: 'resultsFolder', label: 'Results', level: 1, open: true, bold: true },
  { icon: 'stress', label: 'Stress1 (-Axial and bending-)', level: 2, bold: true, selected: true },
  { icon: 'stress', label: 'Displacement1 (-Res disp-)', level: 2 },
  { icon: 'shearPlot', label: 'Shear-Moment Plot1 (-Shear Fo', level: 2 },
  { icon: 'shearPlot', label: 'Shear-Moment Plot2 (-Moment', level: 2 },
]

const partTree: Node[] = [
  { icon: 'part', label: 'Part2  (Default<<Default>_Display', level: 0 },
  { icon: 'history', label: 'History', level: 1, open: false },
  { icon: 'sensors', label: 'Sensors', level: 1 },
  { icon: 'notes', label: 'Annotations', level: 1, open: false },
  { icon: 'material', label: 'Material <not specified>', level: 1 },
]

function SwTree({ nodes }: { nodes: Node[] }) {
  return (
    <ul className="font-['Roboto','Open_Sans',sans-serif] text-[10px] leading-4 whitespace-pre text-[#222]">
      {nodes.map((n) => (
        <li key={n.label} className={`flex h-4 items-center ${n.level === 2 ? 'pl-[30px]' : ''}`}>
          {n.level === 1 && (
            <span className="mr-1 flex">
              <Twisty open={n.open} />
            </span>
          )}
          <span
            className={`flex h-full min-w-0 flex-1 items-center overflow-hidden border ${n.level ? 'gap-0.5' : 'gap-px'} ${n.bold ? 'font-bold text-black' : ''} ${n.selected ? 'border-[#7da7c4] bg-[#a9cce6]' : 'border-transparent'}`}
          >
            <Icon name={n.icon} />
            {n.label}
          </span>
        </li>
      ))}
    </ul>
  )
}

const managerTabs = [
  ['part', 'Feature tree'],
  ['propertyList', 'Properties'],
  ['configs', 'Configurations'],
  ['target', 'Dimensions'],
  ['ball', 'Appearances'],
]

function SwSidePanel() {
  return (
    <aside className="flex w-[188px] shrink-0 flex-col border-r-2 border-[#c8c8c8] bg-[#f6f6f6]">
      <div className="border-t-4 border-[#dcdcdc] pt-px pb-[5px]">
        <Grip />
      </div>
      <div className="flex h-[26px] items-stretch">
        {managerTabs.map(([icon, label], i) => (
          <button
            key={icon}
            aria-label={label}
            className={`flex w-[35px] items-center justify-center ${i ? 'border border-l-0 border-[#9a9a9a] bg-[#d0d0d0]' : 'border-r border-[#9a9a9a]'}`}
          >
            <Icon name={icon} size={18} />
          </button>
        ))}
        <button aria-label="More tabs" className="flex flex-1 items-center justify-center text-[#444]">
          <ChevronRight size={11} />
        </button>
      </div>
      <div className="mx-[2px] flex h-[21px] shrink-0 items-center border border-[#b9b9b9] bg-[#f9f9f9] pl-px">
        <Icon name="funnel" />
        <input aria-label="Filter features" className="min-w-0 flex-1" />
      </div>
      <div className="flex h-[69px] shrink-0">
        <div className="min-w-0 flex-1 overflow-hidden">
          <SwTree nodes={partTree} />
        </div>
        <div className="flex w-[11px] flex-col items-center text-[#444]">
          <button aria-label="Scroll up" className="mt-0.5">
            <ChevronUp size={10} />
          </button>
          <span className="mt-6 h-[17px] w-full bg-[#cdcdcd]" />
          <button aria-label="Scroll down" className="mt-0.5">
            <ChevronDown size={10} />
          </button>
        </div>
      </div>
      <div className="flex h-[13px] shrink-0 items-center text-[#333]">
        <button aria-label="Scroll left" className="w-[13px]">
          <ChevronLeft size={11} />
        </button>
        <span className="h-3 w-[112px] bg-[#cdcdcd]" />
        <button aria-label="Scroll right" className="ml-[35px]">
          <ChevronRight size={11} />
        </button>
      </div>
      <div className="mt-[2px] border-t-2 border-[#d2d2d2]">
        <Grip />
      </div>
      <div className="mx-px flex h-[21px] shrink-0 items-center border border-[#b9b9b9] bg-[#f9f9f9] pl-px">
        <Icon name="funnel" />
        <Caret size={4} />
        <input aria-label="Filter study" className="min-w-0 flex-1" />
      </div>
      <SwTree nodes={studyTree} />
    </aside>
  )
}

const SEGMENTS = 68
const SIDE_BANDS = 8

// stress runs from +1 (red) through 0 (green) to -1 (blue)
const stressColor = (s: number, light: number) => `hsl(${120 - 120 * s} 100% ${light}%)`

function StressBeam() {
  const steps = Array.from({ length: SEGMENTS + 1 }, (_, i) => {
    const t = i / SEGMENTS
    return {
      front: bezier([215, 215], [325, 277], [567, 458], t),
      back: bezier([238, 201], [349, 263], [591, 446], t),
      low: bezier([215, 242], [325, 304], [567, 486], t),
    }
  })
  return (
    <g strokeLinejoin="round">
      {steps.slice(1).map((b, i) => {
        const a = steps[i]
        const s = 1 - (i + 0.5) / SEGMENTS
        const top = stressColor(s, 48)
        return (
          <g key={i} strokeWidth=".8">
            {Array.from({ length: SIDE_BANDS }, (_, k) => {
              const c = stressColor(s * (1 - (2 * (k + 0.5)) / SIDE_BANDS), 18)
              const k0 = k / SIDE_BANDS
              const k1 = (k + 1) / SIDE_BANDS
              return (
                <polygon
                  key={k}
                  points={poly(mix(a.front, a.low, k0), mix(b.front, b.low, k0), mix(b.front, b.low, k1), mix(a.front, a.low, k1))}
                  fill={c}
                  stroke={c}
                />
              )
            })}
            <polygon points={poly(a.front, a.back, b.back, b.front)} fill={top} stroke={top} />
          </g>
        )
      })}
      {steps.map((p, i) => (
        <polyline key={i} points={poly(p.back, p.front, p.low)} fill="none" stroke="#000" strokeOpacity=".65" strokeWidth=".7" />
      ))}
      <polygon points="567,458 591,446 591,473 567,486" fill="#00e828" />
      <polygon points="570,461 588,451 588,471 570,481" fill="#00a81c" />
      <path d="M571 479l16-8v-17M571 475l12-6v-13M571 471l8-4v-8M572 466l4-2v-4" fill="none" stroke="#003c08" strokeWidth=".8" />
      <path d="M571 481l17-9" stroke="#20ff50" strokeWidth="2" />
    </g>
  )
}

const swScale = ['15,2', '12,7', '10,2', '7,62', '5,08', '2,54', '0', '-2,54', '-5,08', '-7,62', '-10,2', '-12,7', '-15,2']

function SwViewport() {
  return (
    <main className="relative min-w-0 flex-1 overflow-hidden bg-white font-['Roboto','Open_Sans',sans-serif]">
      <svg className="block" width="452" height="526" viewBox="188 148 452 526" fontSize="9" fill="#222" role="img" aria-label="Axial and bending stress plot">
        <defs>
          <linearGradient id="swLegend" x1="0" y1="0" x2="0" y2="1">
            <stop offset="0" stopColor="#f00" />
            <stop offset=".25" stopColor="#ff0" />
            <stop offset=".5" stopColor="#0f0" />
            <stop offset=".75" stopColor="#0ff" />
            <stop offset="1" stopColor="#00f" />
          </linearGradient>
          <linearGradient id="shaft">
            <stop offset="0" stopColor="#a00008" />
            <stop offset=".5" stopColor="#f00010" />
            <stop offset="1" stopColor="#900008" />
          </linearGradient>
        </defs>
        <StressBeam />
        <circle cx="227" cy="222" r="5.5" fill="#8a6a00" fillOpacity=".8" />
        <circle cx="226" cy="221" r="2.5" fill="#a8881c" fillOpacity=".8" />
        <path d="M567 404l8 16h8l9-16z" fill="#b00008" />
        <ellipse cx="579.5" cy="404" rx="12.5" ry="5.5" fill="#f20010" />
        <rect x="576" y="345" width="6" height="60" rx="1" fill="url(#shaft)" />
        <circle cx="579" cy="425" r="5.5" fill="#7c6608" />
        <circle cx="578" cy="424" r="2.5" fill="#a08a28" />

        <text x="271" y="346">Axial and bending (N/mm^2 (MPa))</text>
        <rect x="271" y="368" width="19" height="272" fill="url(#swLegend)" />
        {swScale.map((v, i) => (
          <g key={v}>
            <path d={`M289 ${368.5 + Math.round(i * 22.6)}h3`} stroke="#444" />
            <text x="300" y={368 + Math.round(i * 22.6)}>
              {v}
            </text>
          </g>
        ))}
        <path d="M253 659.500h14" stroke="#d88" />
        <path d="M264 655l8 4.500-8 4.500z" fill="#c00008" />
        <text x="274" y="663">Yield strength: 620</text>

        <path d="M221 629v-17" stroke="#184818" strokeWidth="3" />
        <path d="M217 617l4-10 4 10z" fill="#1c7c1c" />
        <path d="M221 629l-12 6" stroke="#101070" strokeWidth="3" />
        <path d="M212 631l-9 8h10z" fill="#2020c0" />
        <path d="M221 629l12 6" stroke="#601010" strokeWidth="3" />
        <path d="M231 632l8 7-11-1z" fill="#d02828" />
        <text x="218" y="606" fill="#888">Y</text>
        <text x="198" y="643" fill="#2a2aa0">Z</text>
        <text x="238" y="643" fill="#c06060">X</text>
        <text x="195" y="671" fontSize="12" fill="#000">*Isometric</text>
      </svg>
      <div className="absolute top-[6px] left-3 text-[9px] leading-[11px] text-[#222]">
        <p>Model name:Part2</p>
        <p>Study name:Ex 8(-Default-)</p>
        <p>Plot type: Axial and bending Stress1</p>
        <p>Deformation scale: 136.274</p>
      </div>
      <button aria-label="Collapse panel" className="absolute top-[237px] left-0 flex h-8 w-[7px] items-center justify-center border border-l-0 border-[#8c8c8c] bg-[#f4f4f4]">
        <span className="h-1 w-1 rounded-full border border-[#888]" />
      </button>
    </main>
  )
}

function ViewTools() {
  return (
    <div className="absolute right-0 bottom-[-8px] z-10 flex items-center">
      <button aria-label="Isometric view" className="flex h-[25px] w-[25px] items-center justify-center border border-[#8a8a8a] bg-[#bdbdbd]">
        <Icon name="viewCube" size={18} />
      </button>
      <button aria-label="Normal to" className="w-[26px] pl-1">
        <Icon name="normalTo" size={18} />
      </button>
      <button aria-label="Zoom to fit" className="w-[26px] pl-1">
        <Icon name="zoomFit" size={18} />
      </button>
      <button aria-label="Zoom to area" className="w-[19px] overflow-hidden pl-1">
        <Icon name="zoomArea" size={18} />
      </button>
    </div>
  )
}

function SwFooter() {
  return (
    <footer className="shrink-0 text-[10px] whitespace-nowrap text-[#222]">
      <div className="flex h-4 border-t border-[#bbb] bg-[#f6f6f6]">
        <div className="flex w-[55px] bg-[#b3b3c0] text-[#8080a0]">
          {['M2 1v6M7 1L3 4l4 3z', 'M6 1L2 4l4 3z', 'M2 1l4 3-4 3z', 'M1 1l4 3-4 3zM6 1v6'].map((d) => (
            <button key={d} aria-label="Move through tabs" className="flex flex-1 items-center justify-center border border-[#9d9dae]">
              <svg width="7" height="7" viewBox="0 0 8 8" aria-hidden="true">
                <path d={d} fill="currentColor" stroke="currentColor" />
              </svg>
            </button>
          ))}
        </div>
        <button className="w-[51px] border-r border-b border-[#999] bg-[#dadada] pl-1">Model</button>
        <button className="w-[60px] border-r border-b border-[#999] bg-[#dadada]">3D Views</button>
        <button className="w-[90px] border-r border-b border-[#999] bg-[#dadada]">Motion Study 1</button>
        <button className="flex w-[49px] items-center gap-[3px] bg-white pl-1 font-bold text-black">
          <Icon name="studyTab" size={9} />
          Ex 8
        </button>
        <span className="flex-1 border border-[#b5b5b5] bg-[#fdfdfd]" />
      </div>
      <p className="h-[13px] bg-[#ececec] pl-px font-['Roboto','Open_Sans',sans-serif] leading-[13px]">
        Rotates and zooms the model to the isometric view orientation.
      </p>
    </footer>
  )
}

function SolidWorks() {
  return (
    <section className="flex min-h-0 min-w-0 flex-col overflow-hidden bg-white">
      <SwTitleBar />
      <Ribbon />
      <div className="relative">
        <CommandTabs />
        <ViewTools />
      </div>
      <div className="flex min-h-0 flex-1">
        <SwSidePanel />
        <SwViewport />
      </div>
      <SwFooter />
    </section>
  )
}

/* ---------- ANSYS window ---------- */

function Row({ children }: { children: ReactNode }) {
  return (
    <div className="flex h-5 items-center overflow-hidden border-b border-[#b8b8b8] pl-[2px]">
      <span className="mr-[3px] h-4 w-px shrink-0 bg-[#aaa]" />
      {children}
    </div>
  )
}

type ToolProps = { icon?: string; label?: string; width?: string; caret?: boolean; off?: boolean; pressed?: boolean }

function Tool({ icon, label, width = 'w-[23px]', caret, off, pressed }: ToolProps) {
  return (
    <button
      aria-label={label ?? icon}
      disabled={off}
      className={`flex h-[19px] shrink-0 items-center gap-0.5 ${width} ${label ? 'pl-1' : 'justify-center'} ${off ? 'text-[#a5a5a5]' : ''} ${pressed ? 'border border-[#b0b0b0] bg-[#f8f8f8]' : ''}`}
    >
      {icon && <Icon name={icon} />}
      {label}
      {caret && (
        <span className={label ? 'mr-1 ml-auto' : 'ml-px'}>
          <Caret color={off ? '#aaa' : '#222'} />
        </span>
      )}
    </button>
  )
}

function Sep() {
  return <span className="mx-[3px] h-4 w-px shrink-0 bg-[#b5b5b5]" />
}

function Choice({ id, label, value, width, off }: { id?: string; label?: string; value: string; width: string; off?: boolean }) {
  return (
    <span className={`relative flex h-4 shrink-0 items-center ${width} ${off ? 'bg-[#f4f4f4] text-[#8f8f8f]' : 'bg-white'}`}>
      <select id={id} aria-label={label} disabled={off} className="h-full w-full appearance-none pl-1" defaultValue={value}>
        <option>{value}</option>
      </select>
      <span className="pointer-events-none absolute right-1">
        <Caret color={off ? '#aaa' : '#222'} />
      </span>
    </span>
  )
}

function AnsysToolbars() {
  return (
    <div className="shrink-0 bg-[#f0f0f0] whitespace-nowrap">
      <Row>
        {['File', 'Edit', 'View', 'Units', 'Tools', 'Help'].map((m, i) => (
          <button key={m} className={`shrink-0 pl-1 text-left ${['w-6', 'w-[26px]', 'w-[30px]', 'w-8', 'w-8', 'w-8'][i]}`}>
            {m}
          </button>
        ))}
      </Row>
      <Row>
        <Tool icon="console" />
        <Tool icon="okBall" />
        <Tool icon="treeJump" width="w-[22px]" />
        <Sep />
        <Tool icon="bolt" label="Solve" width="w-[62px]" caret />
        <Tool label="?✓ Show Errors" width="w-[75px]" />
        <Tool icon="sectionPlane" />
        <Tool icon="noteTag" />
        <Tool icon="chartBox" />
        <Tool icon="greyTree" off />
        <Tool icon="letterBox" width="w-[21px]" />
        <Tool icon="cubeBox" width="w-[30px]" caret />
        <Tool icon="worksheet" label="Worksheet" width="w-[72px]" off />
        <Tool icon="info" />
        <Tool icon="tag" />
      </Row>
      <Row>
        <Tool icon="labelPick" />
        <Tool icon="greyPick" off />
        <Tool icon="xyz" off />
        <Tool icon="pickMode" width="w-7" caret />
        <Tool icon="vertexCube" width="w-[22px]" off />
        <Tool icon="vertexCube" off />
        <Tool icon="faceCube" width="w-[22px]" off />
        <Tool icon="bodyCube" off />
        <Tool icon="nodeCube" />
        <Tool icon="elemCube" />
        <Sep />
        <Tool icon="extend" width="w-7" caret />
        <Sep />
        <Tool icon="rotate" width="w-[22px]" pressed />
        <Tool icon="move" />
        <Tool icon="zoomPan" />
        <Tool icon="zoomIn" />
        <Sep />
        <Tool icon="zoomModel" width="w-[22px]" />
        <Tool icon="zoomBox" />
        <Tool icon="zoomBack" width="w-[22px]" />
        <Tool icon="zoomNext" off />
        <Tool icon="iso" width="w-[22px]" />
        <Tool icon="lookAt" off />
        <Tool icon="eyeCube" />
        <Tool icon="ruler" width="w-[22px]" />
        <Sep />
        <Tool icon="windowBox" width="w-7" caret />
      </Row>
      <Row>
        <Tool icon="vertices" label="Show Vertices" width="w-[87px]" />
        <Tool icon="closeVertices" label="Close Vertices" width="w-[90px]" />
        <Choice label="Tolerance" value="1,5e-003 (Auto Scale)" width="w-[120px]" off />
        <span className="w-[10px]" />
        <Tool icon="wireframe" label="Wireframe" width="w-[68px]" />
        <Sep />
        <Tool icon="showMesh" label="Show Mesh" width="w-[79px]" off />
        <Tool icon="axes" width="w-[22px]" />
        <Tool icon="random" label="Random" width="w-[62px]" />
        <Tool icon="prefs" label="Preferences" width="w-[73px]" />
        <Sep />
        <Tool icon="showMesh" width="w-5" off />
      </Row>
      <Row>
        <Tool icon="size" label="Size" width="w-[51px]" caret />
        <Tool icon="location" label="Location" width="w-[71px]" caret />
        <Tool icon="convert" label="Convert" width="w-[68px]" caret />
        <Tool icon="misc" label="Miscellaneous" width="w-[96px]" caret />
        <Tool icon="prefs" label="Tolerances" width="w-[72px]" />
      </Row>
      <Row>
        <Tool icon="explode" off />
        <Tool icon="reset" label="Reset" width="w-12" off />
        <label htmlFor="explode" className="w-[86px] shrink-0 pl-1">
          Explode Factor:
        </label>
        <input
          id="explode"
          type="range"
          defaultValue={0}
          className="h-3 w-[110px] shrink-0 appearance-none bg-linear-to-r from-[#888] to-[#888] bg-[length:100%_1px] bg-center bg-no-repeat [&::-webkit-slider-thumb]:h-2 [&::-webkit-slider-thumb]:w-[3px] [&::-webkit-slider-thumb]:appearance-none [&::-webkit-slider-thumb]:border [&::-webkit-slider-thumb]:border-[#777] [&::-webkit-slider-thumb]:bg-white"
        />
        <span className="w-[9px]" />
        <Choice label="Assembly center" value="Assembly Center" width="w-[116px]" off />
      </Row>
      <Row>
        <Tool icon="edgeColor" label="Edge Coloring" width="w-[98px]" caret />
        {['edge0', 'edge1', 'edge2', 'edge3', 'edge4'].map((n) => (
          <Tool key={n} icon={n} width="w-[30px]" caret off />
        ))}
        <Tool icon="blackArrow" width="w-[22px]" />
        <Tool icon="gap" width="w-[22px]" />
        <Tool icon="thicken" label="Thicken" width="w-[60px]" />
      </Row>
      <Row>
        <label htmlFor="result-scale" className="w-[35px] shrink-0">
          Result
        </label>
        <Choice id="result-scale" value="68 (Auto Scale)" width="w-[113px]" />
        <span className="w-[3px]" />
        <Tool icon="greyCube" width="w-[29px]" caret />
        <Tool icon="legend" width="w-[30px]" caret />
        <Tool icon="bands" width="w-[29px]" caret />
        <Tool icon="vectors" width="w-[22px]" />
        <Sep />
        <Tool icon="maxTag" width="w-[22px]" />
        <Tool icon="minTag" width="w-[22px]" />
        <Sep />
        <Tool icon="probe" label="Probe" width="w-[52px]" />
        <Sep />
        <label htmlFor="display-scope" className="w-[46px] shrink-0 pl-1">
          Display
        </label>
        <Choice id="display-scope" value="Scoped Bodies" width="w-[96px]" />
      </Row>
    </div>
  )
}

function PanelHead({ title, closable }: { title: string; closable?: boolean }) {
  return (
    <h2 className="flex h-[17px] shrink-0 items-center gap-2 bg-linear-to-r from-[#bfcddb] to-[#d6e2ef] px-[2px] pr-1 whitespace-nowrap text-[#222]">
      <span className="flex-1 overflow-hidden">{title}</span>
      <button aria-label={`Pin ${title}`}>
        <Icon name="pin" size={8} />
      </button>
      {closable && (
        <button aria-label={`Close ${title}`}>
          <X size={9} strokeWidth={4} />
        </button>
      )}
    </h2>
  )
}

const outline: { icon: string; label: string; child?: boolean; selected?: boolean }[] = [
  { icon: 'infoFolder', label: 'Solution Information' },
  { icon: 'contour', label: 'Total Deformation', selected: true },
  { icon: 'beamTool', label: 'Beam Tool' },
  { icon: 'contour', label: 'Direct Stress', child: true },
  { icon: 'contour', label: 'Minimum Combined Stress', child: true },
  { icon: 'contour', label: 'Maximum Combined Stress', child: true },
  { icon: 'contour', label: 'Maximum Bending Stress', child: true },
  { icon: 'probeLens', label: 'Force Reaction' },
  { icon: 'probeLens', label: 'Moment Reaction' },
]

function OutlinePanel() {
  return (
    <section className="flex h-[188px] shrink-0 flex-col bg-white">
      <PanelHead title="Outline" />
      <div className="mt-px flex h-[21px] shrink-0 items-center border-y border-[#ccc] bg-[#f0f0f0] pl-1">
        <span className="mr-[3px] h-4 w-px bg-[#aaa]" />
        <label htmlFor="outline-filter" className="w-[30px]">
          Filter:
        </label>
        <Choice id="outline-filter" value="Name" width="w-[80px]" />
        <input aria-label="Filter text" className="ml-2 h-4 min-w-0 flex-1 bg-white" />
      </div>
      <div className="flex h-5 shrink-0 items-center bg-[#f0f0f0] pl-1">
        <span className="mr-[2px] h-4 w-px bg-[#aaa]" />
        {['refresh', 'eraser', 'merge', 'plusBox', 'folderStop', 'sortAz'].map((n) => (
          <Tool key={n} icon={n} width="w-5" />
        ))}
      </div>
      <div className="flex min-h-0 flex-1 overflow-hidden">
        <div className="min-w-0 flex-1 overflow-hidden font-['Roboto','Open_Sans',sans-serif]">
          <ul className="grid h-[120px] auto-rows-fr whitespace-nowrap">
            {outline.map((o) => (
              <li key={o.label} className="flex items-center overflow-hidden">
                {o.child ? (
                  <>
                    <span className="w-[11px] shrink-0 border-t border-dotted border-[#888]" />
                    <svg width="7" height="9" viewBox="0 0 7 9" className="shrink-0" aria-hidden="true">
                      <path d="M0 5l3 3 4-7" fill="none" stroke="#18a030" strokeWidth="1.5" />
                    </svg>
                    <Icon name={o.icon} />
                    <span className="ml-[3px]">{o.label}</span>
                  </>
                ) : (
                  <>
                    <span className="-ml-[5px] shrink-0">
                      <Icon name={o.icon} />
                    </span>
                    <span className={`ml-[3px] px-px ${o.selected ? 'bg-[#ebebeb]' : ''}`}>{o.label}</span>
                  </>
                )}
              </li>
            ))}
          </ul>
        </div>
        <div className="flex w-[15px] flex-col items-center bg-[#f0f0f0] py-0.5">
          <button aria-label="Scroll up">
            <ChevronUp size={10} />
          </button>
          <span className="mt-auto mb-2 h-[30px] w-full bg-[#cdcdcd]" />
          <button aria-label="Scroll down">
            <ChevronDown size={10} />
          </button>
        </div>
      </div>
      <div className="flex h-[14px] shrink-0 items-center bg-[#f0f0f0]">
        <button aria-label="Scroll left" className="pl-0.5">
          <ChevronLeft size={11} />
        </button>
        <span className="ml-[45px] h-3 w-[60px] bg-[#cdcdcd]" />
        <button aria-label="Scroll right" className="ml-1">
          <ChevronRight size={11} />
        </button>
      </div>
    </section>
  )
}

type Detail = { head?: string; name?: string; value?: string; shade?: boolean; box?: boolean }

const details: Detail[] = [
  { head: 'Scope' },
  { name: 'Scoping...', value: 'Geometry Selec...', shade: true },
  { name: 'Geometry', value: 'All Bodies', shade: true },
  { head: 'Definition' },
  { name: 'Type', value: 'Total Deformati...' },
  { name: 'By', value: 'Time' },
  { name: 'Displ...', value: 'Last', box: true },
  { name: 'Calculat...', value: 'Yes' },
  { name: 'Identifier', value: '', shade: true },
  { name: 'Suppres...', value: 'No' },
  { head: 'Results' },
  { name: 'Mini...', value: '0, m', shade: true, box: true },
  { name: 'Maxi...', value: '1,1003e-003 m', shade: true, box: true },
]

function DetailsPanel() {
  return (
    <section className="flex min-h-0 flex-1 flex-col bg-white">
      <PanelHead title={'Details of "Total Deformation"'} />
      <div className="flex min-h-0 flex-1 border-t border-[#999]">
        <div className="min-w-0 flex-1 overflow-hidden">
          <table className="w-full table-fixed border-collapse whitespace-nowrap">
            <colgroup>
              <col className="w-[11px]" />
              <col className="w-[47px]" />
              <col />
            </colgroup>
            <tbody>
              {details.map((d) => (
                <tr key={d.head ?? d.name} className="h-[15px]">
                  <td className="border-r border-[#bbb] p-0 pl-[2px]">
                    {d.head && (
                      <button aria-label={`Collapse ${d.head}`} className="flex h-[7px] w-[7px] items-center justify-center border border-[#888]">
                        <span className="h-px w-[3px] bg-[#333]" />
                      </button>
                    )}
                  </td>
                  {d.head ? (
                    <th colSpan={2} className="border border-[#bbb] px-[3px] py-0 text-left leading-[14px] font-bold">
                      {d.head}
                    </th>
                  ) : (
                    <>
                      <td className="overflow-hidden border border-[#bbb] py-0 pr-0 pl-[3px] leading-[14px]">
                        <span className="flex items-center">
                          {d.box && (
                            <input type="checkbox" aria-label={d.name} className="mr-[3px] h-[10px] w-[10px] shrink-0 appearance-none border border-[#c8c8c8]" />
                          )}
                          {d.name}
                        </span>
                      </td>
                      <td className={`overflow-hidden border border-[#bbb] py-0 pr-0 pl-[2px] leading-[14px] ${d.shade ? 'bg-[#e8e6e2]' : ''}`}>{d.value}</td>
                    </>
                  )}
                </tr>
              ))}
            </tbody>
          </table>
        </div>
        <div className="flex w-[15px] flex-col items-center bg-[#f0f0f0] py-0.5">
          <button aria-label="Scroll up">
            <ChevronUp size={10} />
          </button>
          <span className="mt-0.5 h-[122px] w-full bg-[#cdcdcd]" />
          <button aria-label="Scroll down" className="mt-auto">
            <ChevronDown size={10} />
          </button>
        </div>
      </div>
    </section>
  )
}

function SectionPlanes() {
  return (
    <section className="flex h-[70px] shrink-0 flex-col">
      <PanelHead title="Section Planes" closable />
      <div className="flex h-[22px] shrink-0 items-center border-t border-[#ccc] pl-1">
        <span className="mr-[3px] h-4 w-px bg-[#aaa]" />
        {['sectionPlane', 'newPlaneOff', 'cross', 'bluePyramid', 'greyHat', 'greyStack'].map((n) => (
          <Tool key={n} icon={n} width="w-5" />
        ))}
      </div>
      <div className="flex-1 border border-[#777] bg-white" />
    </section>
  )
}

const topStops: [number, number, number, number][] = [
  [0, 0, 0, 190],
  [0.23, 0, 0, 200],
  [0.34, 0, 80, 190],
  [0.47, 0, 180, 190],
  [0.57, 0, 200, 140],
  [0.67, 0, 205, 0],
  [0.75, 120, 210, 0],
  [0.82, 208, 208, 0],
  [0.89, 210, 130, 0],
  [0.96, 218, 0, 0],
  [1, 218, 0, 0],
]

function rampAt(t: number, k: number) {
  const j = Math.max(1, topStops.findIndex((s) => s[0] >= t))
  const a = topStops[j - 1]
  const b = topStops[j]
  const f = (t - a[0]) / (b[0] - a[0])
  const ch = [1, 2, 3].map((n) => Math.round((a[n] + (b[n] - a[n]) * f) * k))
  return `rgb(${ch.join(',')})`
}

function DeformedBeam() {
  const count = 120
  const at = (t: number) => ({
    front: bezier([922, 274], [1032, 334], [1241, 476], t),
    back: bezier([943, 262], [1053, 322], [1262, 465], t),
  })
  return (
    <g strokeLinejoin="round">
      <defs>
        <linearGradient id="sideRamp" gradientUnits="userSpaceOnUse" x1="922" y1="0" x2="1241" y2="0">
          {topStops.map(([t]) => (
            <stop key={t} offset={t} stopColor={rampAt(t, 0.38 + Math.max(0, t - 0.88) * 3)} />
          ))}
        </linearGradient>
      </defs>
      <path d="M922 274Q1032 334 1241 476L1240 499Q1032 358 922 298z" fill="url(#sideRamp)" />
      {Array.from({ length: count }, (_, i) => {
        const a = at(i / count)
        const b = at((i + 1) / count)
        // the ramp is keyed to horizontal distance, not the curve parameter
        const top = rampAt((a.front[0] - 922) / 319, 1)
        return <polygon key={i} points={poly(a.front, a.back, b.back, b.front)} fill={top} stroke={top} strokeWidth=".9" />
      })}
      <polygon points="1240,476 1262,465 1261,487 1240,499" fill="#e01010" />
      <polygon points="1243,478 1260,469 1259,485" fill="#6a0000" />
      <polygon points="1243,478 1259,485 1243,495" fill="#e80808" />
    </g>
  )
}

const ansysScale: [string, string][] = [
  ['0,0011003 Max', '#f00'],
  ['0,000978', '#ffa800'],
  ['0,00085575', '#ff0'],
  ['0,0007335', '#a8ff00'],
  ['0,00061125', '#0f0'],
  ['0,000489', '#00ffb0'],
  ['0,00036675', '#0ff'],
  ['0,0002445', '#00a8ff'],
  ['0,00012225', '#00f'],
  ['0 Min', ''],
]

function AnsysCanvas() {
  return (
    <div className="min-h-0 flex-1 overflow-hidden border-t-2 border-l-2 border-[#666] bg-linear-to-b from-[#6c8be0] to-white">
      <svg className="block" width="479" height="369" viewBox="799 206 479 369" fontSize="9" fill="#111" role="img" aria-label="Total deformation plot">
        <DeformedBeam />
        <text x="811" y="228" fontWeight="700">A: Static Structural</text>
        <text x="811" y="242">Total Deformation</text>
        <text x="811" y="255">Type: Total Deformation</text>
        <text x="811" y="269">Unit: m</text>
        <text x="811" y="282">Time: 1</text>
        {ansysScale.map(([label, color], i) => (
          <g key={label}>
            {color && <rect x="812" y={305 + i * 15} width="13" height="15" fill={color} stroke="#222" strokeWidth=".8" />}
            <text x="833" y={308 + Math.round(i * 14.8)} fontWeight={i === 0 || i === 9 ? 700 : 400}>
              {label}
            </text>
          </g>
        ))}
        <text x="1258" y="244" textAnchor="end" fontSize="21" fontWeight="700" fill="#fff">ANSYS</text>
        <text x="1258" y="260" textAnchor="end" fontSize="12" fill="#fff">R18.1</text>

        <rect x="962" y="541" width="75" height="7" fill="#000" />
        <rect x="1037" y="541.5" width="75" height="6" fill="#fff" stroke="#000" />
        <text x="951" y="538">0,000</text>
        <text x="1101" y="538">0,500 (m)</text>
        <text x="1026" y="559">0,250</text>

        <path d="M1227.500 531v-18" stroke="#106010" strokeWidth="1.6" />
        <path d="M1224 516l3.500-8 3.500 8z" fill="#106810" />
        <path d="M1227 533l-14 8" stroke="#1010a0" strokeWidth="1.6" />
        <path d="M1215 538l-7 7 9-2z" fill="#1010c0" />
        <path d="M1228 533l14 7" stroke="#a01010" strokeWidth="1.6" />
        <path d="M1240 537l9 8-11-3z" fill="#c01010" />
        <circle cx="1227.5" cy="532.5" r="3" fill="#20b0b0" />
        <text x="1228" y="504" fill="#30a030">Y</text>
        <text x="1202" y="548" fill="#2020c0">Z</text>
        <text x="1252" y="548" fill="#d03030">X</text>
      </svg>
    </div>
  )
}

function Slant({ d, width = 8 }: { d: string; width?: number }) {
  return (
    <svg width={width} height="13" viewBox={`0 0 ${width} 13`} className="shrink-0" aria-hidden="true">
      <path d={d} fill="none" stroke="#222" />
    </svg>
  )
}

function ViewTabs() {
  return (
    <nav className="flex h-[14px] shrink-0 items-center border border-[#444] bg-white whitespace-nowrap">
      <Slant d="M1 0l6 13" />
      <button className="w-[50px] font-bold">Geometry</button>
      <Slant d="M0 13L7 0M3 7l3 6" />
      <button className="w-[60px]">Print Preview</button>
      <Slant d="M1 0l6 13M1 13L7 0" />
      <button className="w-[68px]">Report Preview</button>
      <Slant d="M0 13L7 0" />
    </nav>
  )
}

function GraphPanel() {
  return (
    <section className="flex min-w-0 flex-1 flex-col">
      <PanelHead title="Graph" />
      <div className="flex h-[22px] shrink-0 items-center border-t border-[#ccc] bg-[#f0f0f0] pl-1 whitespace-nowrap">
        <span className="mr-1 h-4 w-px bg-[#aaa]" />
        <span className="w-[49px] shrink-0">Animation</span>
        <Tool icon="play" width="w-5" />
        <Tool icon="stop" width="w-5" pressed />
        <Sep />
        <Tool icon="distGreen" width="w-5" pressed />
        <Tool icon="distBlue" width="w-5" />
        <Sep />
        <Tool icon="bulb" width="w-5" />
        <span className="ml-1 flex min-w-0 flex-1 [&>span]:flex-1">
          <Choice label="Frames" value="10 Frames" width="w-auto" />
        </span>
      </div>
      <div className="h-[29px] bg-white px-11 pt-[7px] pr-[22px]">
        <div className="h-[13px] border border-b-2 border-[#888] border-b-[#444] bg-white" />
      </div>
      <nav className="flex h-[19px] items-center whitespace-nowrap">
        <svg width="16" height="19" viewBox="0 0 16 19" aria-hidden="true">
          <path d="M2 0l13 18" stroke="#aaa" fill="none" />
        </svg>
        <button className="h-full w-[53px] rounded-b border-r border-b border-[#aaa]">Messages</button>
        <button className="h-full w-[106px] rounded-b border-b border-[#aaa]">Graphics Annotations</button>
        <button className="h-full w-[37px] rounded-b border-x border-b border-[#aaa] bg-white font-bold">Graph</button>
      </nav>
    </section>
  )
}

function TickBox({ label }: { label: string }) {
  return (
    <span className="relative mr-1 flex h-[11px] w-[11px] shrink-0">
      <input type="checkbox" aria-label={label} defaultChecked className="peer h-full w-full appearance-none border border-[#999] bg-white" />
      <svg viewBox="0 0 11 11" className="pointer-events-none absolute inset-0 hidden peer-checked:block" aria-hidden="true">
        <path d="M2.500 5l2 2.500 4-5" fill="none" stroke="#111" strokeWidth="1.8" />
      </svg>
    </span>
  )
}

function TabularPanel() {
  return (
    <section className="flex w-[187px] shrink-0 flex-col overflow-hidden">
      <PanelHead title="Tabular Data" />
      <div className="h-[54px] overflow-hidden border-t border-l border-[#777] bg-[#a0a0a0]">
        <table className="w-[240px] table-fixed border-collapse bg-[#f0f0f0] whitespace-nowrap">
          <colgroup>
            <col className="w-3" />
            <col className="w-[43px]" />
            <col className="w-[86px]" />
            <col />
          </colgroup>
          <thead>
            <tr className="h-[14px] border-b border-[#aaa]">
              <th className="p-0" />
              <th className="border-x border-[#aaa] p-0 text-center font-normal">Time [s]</th>
              <th className="border-x border-[#aaa] p-0 pl-[3px] font-normal text-[#d82020]">
                <span className="flex items-center">
                  <TickBox label="Minimum" />
                  Minimum [m]
                </span>
              </th>
              <th className="border-x border-[#aaa] p-0 pl-[3px] font-normal text-[#209838]">
                <span className="flex items-center">
                  <TickBox label="Maximum" />
                  Maximum [m]
                </span>
              </th>
            </tr>
          </thead>
          <tbody>
            <tr className="h-[14px] border-b border-[#aaa]">
              <th className="border-r border-[#aaa] p-0 font-normal">1</th>
              <td className="border-r border-[#aaa] p-0 pl-0.5">1,</td>
              <td className="border-r border-[#aaa] p-0 pl-0.5">0,</td>
              <td className="p-0 pl-0.5">1,1003e-003</td>
            </tr>
          </tbody>
        </table>
      </div>
      <div className="flex h-[14px] items-center">
        <button aria-label="Scroll left" className="pl-0.5">
          <ChevronLeft size={11} />
        </button>
        <span className="ml-0.5 h-3 w-[125px] bg-[#cdcdcd]" />
        <button aria-label="Scroll right" className="mr-0.5 ml-auto">
          <ChevronRight size={11} />
        </button>
      </div>
    </section>
  )
}

function AnsysStatus() {
  const cell = 'flex h-[15px] shrink-0 items-center overflow-hidden border-t border-l border-[#a5a5a5] pl-0.5'
  return (
    <footer className="flex h-[18px] shrink-0 items-center gap-0.5 border-t border-[#ddd] bg-[#f0f0f0] pb-px pl-0.5 font-['Roboto','Open_Sans',sans-serif] text-[10px] whitespace-nowrap">
      <span className={`w-[169px] ${cell}`} />
      <span className={`w-[81px] ${cell}`} />
      <span className={`w-[68px] gap-0.5 ${cell}`}>
        <Icon name="message" />
        No Messag
      </span>
      <span className={`w-[151px] ${cell}`}>No Selection</span>
      <span className={`min-w-0 flex-1 justify-between ${cell}`}>
        <span>Metric (m, kg, N, s, V, A)</span>
        <span className="w-[27px] overflow-hidden">Degre</span>
      </span>
      <svg width="12" height="14" viewBox="0 0 12 14" aria-hidden="true">
        <path d="M0 14L12 2M4 14l8-8M8 14l4-4" stroke="#aaa" />
      </svg>
    </footer>
  )
}

function Ansys() {
  return (
    <section className="relative z-20 flex min-h-0 min-w-0 flex-col overflow-hidden border-l-2 border-[#8a8a8a] bg-[#f0f0f0] text-[9px] text-[#111] shadow-[-3px_0_8px_rgba(0,0,0,0.35)]">
      <header className="flex h-[27px] shrink-0 items-center bg-white pl-[5px] text-[10px] whitespace-nowrap">
        <svg width="14" height="14" viewBox="0 0 14 14" aria-hidden="true">
          <circle cx="7" cy="7" r="7" fill="#a01822" />
          <path d="M3.500 10V4.500L7 8l3.500-3.500V10" fill="none" stroke="#fff" strokeWidth="1.8" />
        </svg>
        <h1 className="ml-[3px] flex-1 font-['Roboto','Open_Sans',sans-serif]">
          A : Static Structural - Mechanical [ANSYS Mechanical Enterprise]
        </h1>
        <button aria-label="Minimize" className="flex w-[39px] justify-center text-[#888]">
          <Minus size={10} />
        </button>
        <button aria-label="Maximize" className="flex w-[39px] justify-center">
          <Square size={10} />
        </button>
        <button aria-label="Close" className="flex w-[39px] justify-center">
          <X size={12} strokeWidth={1.5} />
        </button>
        <span className="w-[2px]" />
      </header>
      <AnsysToolbars />
      <div className="flex min-h-0 flex-1 gap-[3px]">
        <div className="flex w-[152px] shrink-0 flex-col gap-[5px] pb-1">
          <OutlinePanel />
          <DetailsPanel />
          <SectionPlanes />
        </div>
        <div className="flex min-w-0 flex-1 flex-col pr-[2px] pb-[3px]">
          <AnsysCanvas />
          <ViewTabs />
          <div className="mt-[5px] flex shrink-0 gap-1">
            <GraphPanel />
            <TabularPanel />
          </div>
        </div>
      </div>
      <AnsysStatus />
    </section>
  )
}

export default function App() {
  return (
    <div className="grid h-screen grid-cols-2 grid-rows-[minmax(0,1fr)] overflow-hidden bg-black py-[17px] font-['Open_Sans','Noto_Sans',sans-serif]">
      <SolidWorks />
      <Ansys />
    </div>
  )
}
